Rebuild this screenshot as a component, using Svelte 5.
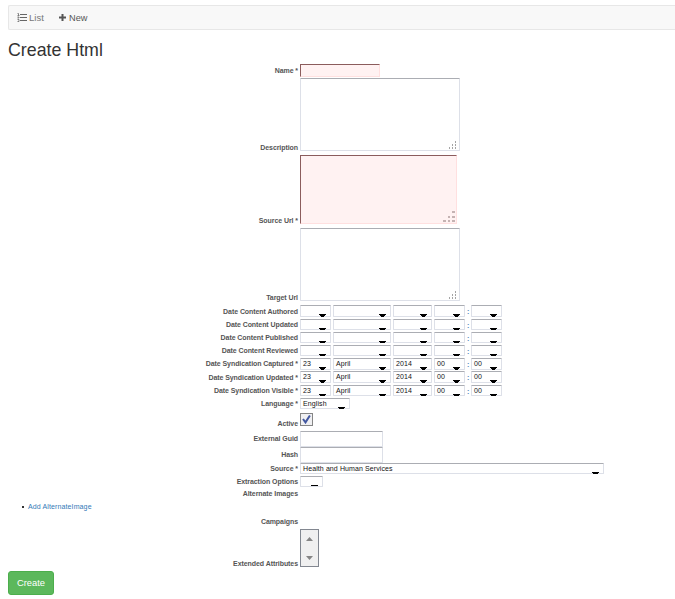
<script>
  // top: top edge, h: control height, mid: vertical centre of the label
  const blank = ['', '', '', '', ''];
  const stamp = ['23', 'April', '2014', '00', '00'];
  const widths = [31, 58, 39, 31, 31];
  const fields = [
    { label: 'Name *', top: 64, h: 13, mid: 71, kind: 'input', w: 80, error: true },
    { label: 'Description', top: 78, h: 73, mid: 148, kind: 'area', w: 160 },
    { label: 'Source Url *', top: 155, h: 69, mid: 221, kind: 'area', w: 157, error: true },
    { label: 'Target Url', top: 228, h: 73, mid: 298, kind: 'area', w: 160 },
    { label: 'Date Content Authored', top: 305, h: 12, mid: 312, kind: 'date', values: blank, arrow: 3 },
    { label: 'Date Content Updated', top: 319, h: 11, mid: 325, kind: 'date', values: blank, arrow: 2 },
    { label: 'Date Content Published', top: 332, h: 11, mid: 338, kind: 'date', values: blank, arrow: 2 },
    { label: 'Date Content Reviewed', top: 345, h: 11, mid: 351, kind: 'date', values: blank, arrow: 2 },
    { label: 'Date Syndication Captured *', top: 358, h: 12, mid: 364, kind: 'date', values: stamp, arrow: 3 },
    { label: 'Date Syndication Updated *', top: 371, h: 12, mid: 378, kind: 'date', values: stamp, arrow: 3 },
    { label: 'Date Syndication Visible *', top: 385, h: 11, mid: 391, kind: 'date', values: stamp, arrow: 2 },
    { label: 'Language *', top: 398, h: 11, mid: 404, kind: 'select', w: 50, value: 'English', arrow: 2 },
    { label: 'Active', top: 413, h: 13, mid: 424, kind: 'check' },
    { label: 'External Guid', top: 431, h: 16, mid: 439, kind: 'input', w: 83 },
    { label: 'Hash', top: 447, h: 16, mid: 455, kind: 'input', w: 83 },
    { label: 'Source *', top: 463, h: 11, mid: 469, kind: 'select', w: 304, value: 'Health and Human Services', arrow: 2 },
    { label: 'Extraction Options', top: 476, h: 11, mid: 482, kind: 'select', w: 23, value: '', arrow: 1 },
    { label: 'Alternate Images', top: 488, h: 11, mid: 494, kind: 'none' }
  ];
  const rows = fields.map((f, i) => ({
    ...f,
    gap: i ? f.top - fields[i - 1].top - fields[i - 1].h : 0
  }));
</script>

{#snippet select(value, w, h, arrow)}
  <span class="select" style="width:{w}px;height:{h}px">
    <span class="value">{value}</span>
    <svg class="arrow" class:raised={arrow === 1} width="7" height={arrow} viewBox="0 0 7 {arrow}" shape-rendering="crispEdges">
      <path d={arrow === 1 ? 'M0 0h7v1H0z' : 'M0 0h7v1H6v1H5v1H2V2H1V1H0z'} />
    </svg>
  </span>
{/snippet}

<div class="page">
  <nav>
    <a class="list" href="#list">
      <svg width="10" height="9" viewBox="0 0 10 9" fill="none" stroke="currentColor">
        <path d="M3 1.5h7M3 4.5h7M3 7.5h7" />
        <path d="M.5 .5h1v2M.5 2.5h2M.5 4h1.5v1H.5M.5 6.5h1.5v2H.5" stroke-width=".8" />
      </svg>List
    </a>
    <a class="new" href="#new">
      <svg width="7" height="7" viewBox="0 0 7 7" fill="currentColor">
        <path d="M2.5 0h2v2.5H7v2H4.5V7h-2V4.5H0v-2h2.5z" />
      </svg>New
    </a>
  </nav>
  <h1>Create Html</h1>

  <form>
    {#each rows as f}
      <div class="row" style="margin-top:{f.gap}px;height:{f.h}px">
        <span class="label" style="padding-top:{f.mid - 4 - f.top}px">{f.label}</span>
        {#if f.kind === 'input'}
          <span class="box" class:error={f.error} style="width:{f.w}px"></span>
        {:else if f.kind === 'area'}
          <span class="box area" class:error={f.error} style="width:{f.w}px">
            {#if f.error}
              <svg width="12" height="12" viewBox="0 0 12 12" fill="#c5b3b3" shape-rendering="crispEdges">
                <path d="M9 0h3v2H9zM5 5h2v2H5zM9 5h3v2H9zM0 9h3v2H0zM5 9h2v2H5zM9 9h3v2H9z" />
              </svg>
            {:else}
              <svg class="fine" width="8" height="8" viewBox="0 0 8 8" fill="#a4a4a4" shape-rendering="crispEdges">
                <path d="M6 0h1v2H6zM3 3h1v2H3zM6 3h1v2H6zM0 6h1v2H0zM3 6h1v2H3zM6 6h1v2H6z" />
              </svg>
            {/if}
          </span>
        {:else if f.kind === 'date'}
          <span class="date">
            {#each f.values as v, i}
              {#if i === 4}<span class="colon">:</span>{/if}
              {@render select(v, widths[i], f.h, f.arrow)}
            {/each}
          </span>
        {:else if f.kind === 'select'}
          {@render select(f.value, f.w, f.h, f.arrow)}
        {:else if f.kind === 'check'}
          <span class="check">
            <svg width="9" height="9" viewBox="0 0 9 9" fill="none" stroke="#4358a0" stroke-width="2">
              <path d="M1 4 3.5 7.4 7.9 .5" />
            </svg>
          </span>
        {/if}
      </div>
    {/each}

    <ul><li><a href="#add">Add AlternateImage</a></li></ul>

    <div class="row campaigns"><span class="label">Campaigns</span></div>
    <div class="row extended">
      <span class="label">Extended Attributes</span>
      <span class="multi">
        <svg width="7" height="4" viewBox="0 0 7 4"><path d="M0 4 3.5 0 7 4z" fill="#858585" /></svg>
        <svg width="7" height="4" viewBox="0 0 7 4"><path d="M0 0h7L3.5 4z" fill="#858585" /></svg>
      </span>
    </div>
    <button type="button">Create</button>
  </form>
</div>

<style>
  .page {
    box-sizing: border-box;
    width: 675px;
    height: 599px;
    padding: 5px 0 0 8px;
    overflow: hidden;
    background: #fff;
    color: #333;
    font: 7px/8px "Liberation Sans", Arial, sans-serif;
  }
  .page * { box-sizing: border-box; }
  nav {
    display: flex;
    height: 25px;
    padding-left: 8px;
    align-items: center;
    border: 1px solid #e7e7e7;
    border-right: 0;
    border-radius: 2px 0 0 2px;
    background: #f8f8f8;
  }
  nav a {
    display: flex;
    align-items: center;
    color: #777;
    font-size: 9.5px;
    line-height: 12px;
    text-decoration: none;
  }
  nav .list { gap: 2px; width: 42px; }
  nav .list svg { color: #666; }
  nav .new { gap: 3px; color: #555; font-size: 9.2px; }
  h1 {
    height: 34px;
    margin: 0;
    padding-top: 10px;
    font-size: 17.8px;
    font-weight: 400;
    line-height: 20px;
  }
  form { margin: 0; }
  .row { display: flex; gap: 2px; }
  .label {
    flex: none;
    width: 290px;
    color: #555;
    font-weight: 700;
    letter-spacing: -0.07px;
    text-align: right;
    white-space: nowrap;
  }
  .box {
    display: block;
    height: 100%;
    border: 1px solid #dde0e8;
    border-top-color: #abadb3;
    border-radius: 1px;
    background: #fff;
  }
  .box.error {
    border-color: #8b5c5c #ffe0e0 #ffe0e0 #8b5c5c;
    border-radius: 0;
    background: #fff2f2;
  }
  .area {
    display: flex;
    align-items: flex-end;
    justify-content: flex-end;
    padding: 0 1px 0 0;
  }
  .area .fine { margin: 0 1px 1px 0; }
  .select {
    position: relative;
    flex: none;
    display: block;
    border: 1px solid #dde0e8;
    border-top-color: #abadb3;
    border-radius: 1px;
    background: #fff;
    color: #111;
  }
  .value {
    display: block;
    padding: 1px 0 0 2px;
    line-height: 8px;
    letter-spacing: 0.1px;
    white-space: nowrap;
  }
  .arrow {
    position: absolute;
    right: 4px;
    bottom: -1px;
  }
  .arrow.raised { bottom: 0; }
  .date { display: flex; gap: 2px; }
  .colon {
    width: 2px;
    color: #4f83b8;
    padding-top: 3px;
    font-weight: 700;
  }
  .check {
    display: flex;
    width: 13px;
    height: 13px;
    align-items: center;
    justify-content: center;
    border: 1px solid #858585;
    background: #f0f0f2;
  }
  ul {
    height: 19px;
    margin: 0;
    padding: 4px 0 0 20px;
    list-style: none;
  }
  li {
    display: flex;
    align-items: center;
  }
  li::before {
    content: "";
    width: 2px;
    height: 2px;
    margin: 0 4px 0 -6px;
    background: #333;
  }
  li a {
    color: #337ab7;
    font-size: 7px;
    letter-spacing: 0.12px;
    text-decoration: none;
  }
  .campaigns { height: 11px; }
  .extended { height: 38px; }
  .extended .label { padding-top: 31px; }
  .multi {
    display: flex;
    width: 19px;
    height: 38px;
    padding: 7px 0 6px;
    flex-direction: column;
    align-items: center;
    justify-content: space-between;
    border: 1px solid #828790;
    background: #f0f0f0;
  }
  button {
    display: block;
    width: 46px;
    height: 24px;
    margin-top: 4px;
    padding: 0;
    border: 1px solid #4cae4c;
    border-radius: 3px;
    background: #5cb85c;
    color: #fff;
    font: 9.4px/12px "Liberation Sans", Arial, sans-serif;
  }
</style>
